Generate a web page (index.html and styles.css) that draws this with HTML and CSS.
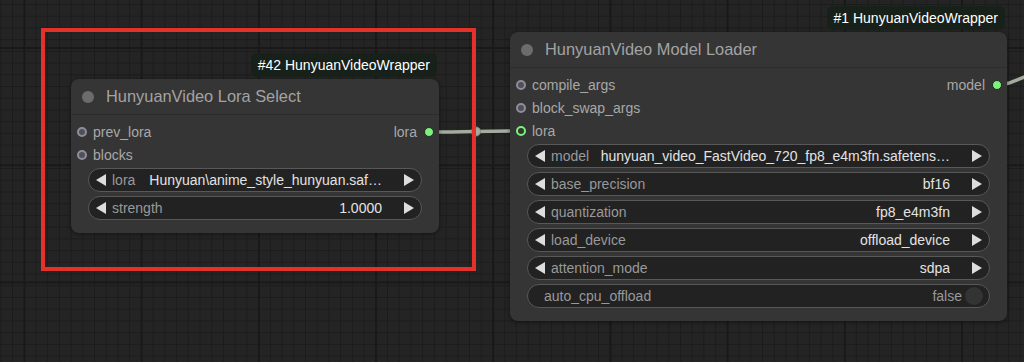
FILE: index.html
```html
<!DOCTYPE html>
<html lang="en">
<head>
  <meta charset="UTF-8">
  <meta name="viewport" content="width=device-width, initial-scale=1.0">
  <title>HunyuanVideo nodes</title>
  <link rel="stylesheet" href="styles.css">
</head>
<body>
  <div class="canvas">
    <!-- links between nodes -->
    <svg class="wires" width="1024" height="362" viewBox="0 0 1024 362">
      <path d="M429 132 C 470 132, 482 131, 521 131" />
      <circle cx="476" cy="131.5" r="4.5" />
      <path d="M998 85 C 1006 85, 1012 82, 1034 73" />
    </svg>

    <div class="node node-lora">
      <div class="badge">#42 HunyuanVideoWrapper</div>
      <div class="title"><span class="title-dot"></span>HunyuanVideo Lora Select</div>
      <div class="body">
        <div class="slot-row">
          <span class="slot-in"><i class="dot"></i>prev_lora</span>
          <span class="slot-out">lora<i class="dot-out"></i></span>
        </div>
        <div class="slot-row">
          <span class="slot-in"><i class="dot"></i>blocks</span>
        </div>
        <div class="widgets">
          <div class="widget">
            <span class="arrow-l"></span><span class="label">lora</span>
            <span class="value">Hunyuan\anime_style_hunyuan.saf…</span>
            <span class="arrow-r"></span>
          </div>
          <div class="widget">
            <span class="arrow-l"></span><span class="label">strength</span>
            <span class="value">1.0000</span>
            <span class="arrow-r"></span>
          </div>
        </div>
      </div>
    </div>

    <div class="node node-loader">
      <div class="badge">#1 HunyuanVideoWrapper</div>
      <div class="title"><span class="title-dot"></span>HunyuanVideo Model Loader</div>
      <div class="body">
        <div class="slot-row">
          <span class="slot-in"><i class="dot"></i>compile_args</span>
          <span class="slot-out">model<i class="dot-out"></i></span>
        </div>
        <div class="slot-row">
          <span class="slot-in"><i class="dot"></i>block_swap_args</span>
        </div>
        <div class="slot-row">
          <span class="slot-in"><i class="dot linked"></i>lora</span>
        </div>
        <div class="widgets">
          <div class="widget">
            <span class="arrow-l"></span><span class="label">model</span>
            <span class="value">hunyuan_video_FastVideo_720_fp8_e4m3fn.safetens…</span>
            <span class="arrow-r"></span>
          </div>
          <div class="widget">
            <span class="arrow-l"></span><span class="label">base_precision</span>
            <span class="value">bf16</span>
            <span class="arrow-r"></span>
          </div>
          <div class="widget">
            <span class="arrow-l"></span><span class="label">quantization</span>
            <span class="value">fp8_e4m3fn</span>
            <span class="arrow-r"></span>
          </div>
          <div class="widget">
            <span class="arrow-l"></span><span class="label">load_device</span>
            <span class="value">offload_device</span>
            <span class="arrow-r"></span>
          </div>
          <div class="widget">
            <span class="arrow-l"></span><span class="label">attention_mode</span>
            <span class="value">sdpa</span>
            <span class="arrow-r"></span>
          </div>
          <div class="widget toggle">
            <span class="label">auto_cpu_offload</span>
            <span class="value off">false</span>
            <span class="knob"></span>
          </div>
        </div>
      </div>
    </div>

    <div class="highlight"></div>
  </div>
</body>
</html>
```

FILE: styles.css
```css
*{margin: 0;padding: 0;box-sizing: border-box;}
body {
  background: #222;
  font-family: "Liberation Sans", Arial, sans-serif;
}
.canvas {
  position: relative;
  width: 1024px;
  height: 362px;
  overflow: hidden;
  background-color: #242424;
  background-image:
    linear-gradient(to right, #191919 2px, transparent 2px),
    linear-gradient(to bottom, #191919 2px, transparent 2px),
    linear-gradient(to right, #1c1c1c 1px, transparent 1px),
    linear-gradient(to bottom, #1c1c1c 1px, transparent 1px);
  background-size: 117.2px 117.2px, 117.2px 117.2px, 11.72px 11.72px, 11.72px 11.72px;
  background-position: 23.5px 0, 0 47px, 0.3px 0, 0 4px;
}
.wires {
  position: absolute;
  top: 0;
  left: 0;
}
.wires path {
  fill: none;
  stroke: #a3ad9f;
  stroke-width: 3.5;
}
.wires circle {
  fill: #a3ad9f;
  stroke: #7f887c;
  stroke-width: 1;
}

/* nodes */
.node {
  position: absolute;
  background: #353535;
  border-radius: 8px;
  box-shadow: 0 1px 4px rgba(0,0,0,0.45);
}
.node-lora {
  left: 71px;
  top: 79px;
  width: 368px;
}
.node-loader {
  left: 510px;
  top: 32px;
  width: 497px;
}
.badge {
  position: absolute;
  right: 2px;
  bottom: calc(100% + 2px);
  height: 24px;
  line-height: 24px;
  padding: 0 7px;
  background: #17211a;
  color: #fff;
  font-size: 14px;
  border-radius: 6px;
  white-space: nowrap;
}
.title {
  display: flex;
  align-items: center;
  height: 36px;
  padding-left: 11px;
  border-bottom: 1px solid #2c2c2c;
  color: #a3a3a3;
  font-size: 16.4px;
  white-space: nowrap;
}
.title-dot {
  width: 12px;
  height: 12px;
  border-radius: 50%;
  background: #6c6c6c;
  margin-right: 12px;
}
.body {
  padding: 5px 0 13px;
}
.slot-row {
  display: flex;
  justify-content: space-between;
  align-items: center;
  height: 23px;
  font-size: 14px;
  color: #a8a8a8;
}
.slot-in {
  display: flex;
  align-items: center;
}
.dot {
  width: 10px;
  height: 10px;
  margin: 0 6px 0 6px;
  border-radius: 50%;
  border: 2.5px solid #8e8e9c;
  background: #505058;
}
.dot.linked {
  border-color: #7ef07e;
  background: #2e3a2e;
}
.slot-out {
  display: flex;
  align-items: center;
}
.dot-out {
  width: 10px;
  height: 10px;
  margin: 0 5px 0 7px;
  border-radius: 50%;
  background: #7ef07e;
  border: 1px solid #1f2a1f;
}

/* widgets */
.widgets {
  display: flex;
  flex-direction: column;
  gap: 4px;
  margin: 2px 17px 0;
}
.widget {
  display: flex;
  align-items: center;
  height: 24px;
  border: 1px solid #585858;
  border-radius: 12px;
  background: #222;
  font-size: 14px;
  white-space: nowrap;
  overflow: hidden;
}
.arrow-l {
  width: 0;
  height: 0;
  margin-left: 7px;
  border-right: 10px solid #ddd;
  border-top: 6px solid transparent;
  border-bottom: 6px solid transparent;
}
.arrow-r {
  width: 0;
  height: 0;
  margin-right: 7px;
  border-left: 10px solid #ddd;
  border-top: 6px solid transparent;
  border-bottom: 6px solid transparent;
}
.label {
  margin-left: 6px;
  color: #999;
}
.value {
  flex: 1;
  margin: 0 22px 0 10px;
  text-align: right;
  color: #e2e2e2;
  overflow: hidden;
}
.toggle .label {
  margin-left: 16px;
}
.value.off {
  margin-right: 3px;
  color: #999;
}
.knob {
  width: 18px;
  height: 18px;
  margin-right: 6px;
  border-radius: 50%;
  background: #333;
}

/* annotation box */
.highlight {
  position: absolute;
  left: 41px;
  top: 28px;
  width: 435px;
  height: 243px;
  border: 4px solid #e4322a;
}
```
